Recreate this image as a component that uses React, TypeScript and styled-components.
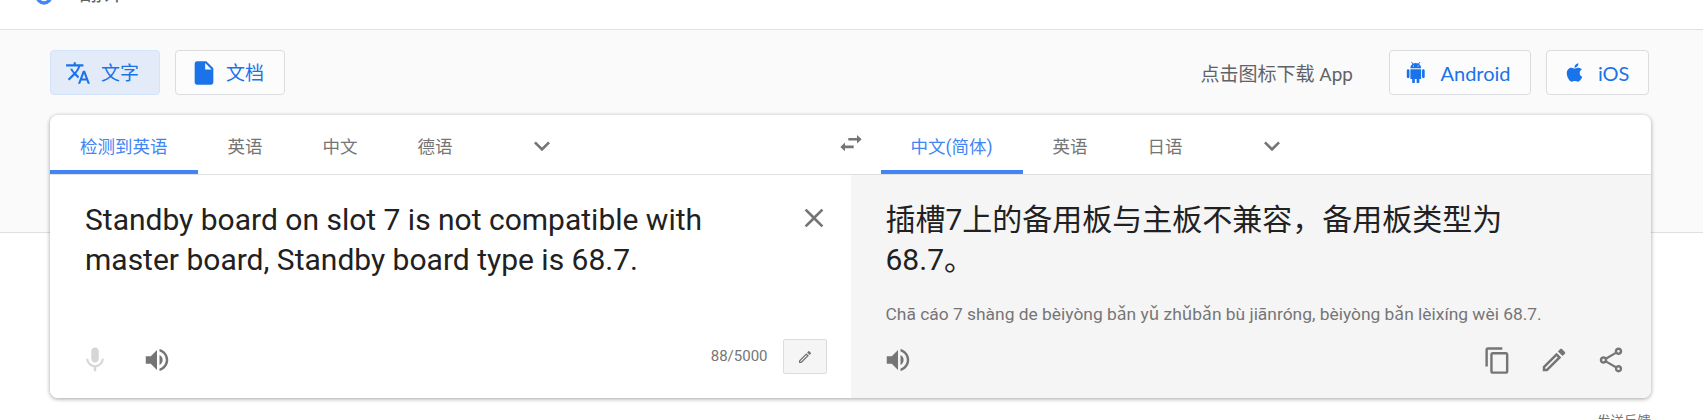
import React from 'react';
import styled, { createGlobalStyle } from 'styled-components';
import { FaApple } from 'react-icons/fa';
import {
  MdTranslate,
  MdInsertDriveFile,
  MdKeyboardArrowDown,
  MdClose,
  MdMic,
  MdVolumeUp,
  MdContentCopy,
  MdOutlineEdit,
  MdOutlineShare,
} from 'react-icons/md';

const colors = {
  blue: '#1a73e8',
  tab: '#4285f4',
  gray: '#757575',
  text: '#212121',
  line: '#e0e0e0',
};

const GlobalStyle = createGlobalStyle`
  html, body { margin: 0; padding: 0; background: #fff; overflow: hidden; }
  body { font-family: Roboto, "Noto Sans CJK SC", sans-serif; color: ${colors.text}; }
`;

const Page = styled.div`
  width: 1703px;
  height: 420px;
  overflow: hidden;
`;

// page is scrolled a little, only the bottom of the header shows
const TopBar = styled.header`
  height: 29px;
  overflow: hidden;
  border-bottom: 1px solid ${colors.line};
  display: flex;
  align-items: flex-end;
  padding-left: 36px;
  gap: 27px;
`;

const Logo = styled.svg`
  width: 16px;
  height: 20px;
  margin-bottom: 24px;
  flex: none;
`;

const Brand = styled.span`
  font-size: 23px;
  line-height: 30px;
  margin-bottom: 21px;
  color: #5f6368;
`;

const Band = styled.section`
  background: #fafafa;
  border-bottom: 1px solid ${colors.line};
  box-sizing: border-box;
  height: 203px;
  padding: 20px 52px 0 50px;
`;

const Toolbar = styled.div`
  display: flex;
  align-items: center;
  height: 45px;
  margin-bottom: 20px;
  padding-right: 2px;
`;

const ModeButton = styled.button<{ $active?: boolean }>`
  display: flex;
  align-items: center;
  height: 45px;
  width: 110px;
  box-sizing: border-box;
  white-space: nowrap;
  padding: 0 0 0 14px;
  margin-right: ${(p) => (p.$active ? 15 : 0)}px;
  gap: ${(p) => (p.$active ? 10 : 8)}px;
  border-radius: 4px;
  border: 1px solid ${(p) => (p.$active ? '#d2e3fc' : '#dadce0')};
  background: ${(p) => (p.$active ? '#e4ebf8' : '#fcfcfc')};
  color: ${colors.blue};
  font-family: inherit;
  font-size: 19px;
`;

const ModeLabel = styled.span`
  margin-bottom: 3px;
`;

const DownloadHint = styled.span`
  margin-left: auto;
  margin-right: 36px;
  font-size: 19px;
  color: #5f6368;
`;

const StoreButton = styled.button<{ $wide?: boolean }>`
  display: flex;
  align-items: center;
  height: 45px;
  box-sizing: border-box;
  white-space: nowrap;
  width: ${(p) => (p.$wide ? 142 : 103)}px;
  padding: 0 0 0 ${(p) => (p.$wide ? 15 : 17)}px;
  gap: ${(p) => (p.$wide ? 14 : 13)}px;
  margin-right: ${(p) => (p.$wide ? 15 : 0)}px;
  border-radius: 4px;
  border: 1px solid #dadce0;
  background: #fcfcfc;
  color: ${colors.blue};
  font-family: Lato, Roboto, sans-serif;
  font-size: 20px;
`;

const Card = styled.div`
  width: 1601px;
  height: 283px;
  background: #fff;
  border-radius: 8px;
  box-shadow: 0 1px 4px rgba(0, 0, 0, 0.37);
  overflow: hidden;
  display: flex;
  flex-direction: column;
`;

const LangBar = styled.div`
  display: grid;
  grid-template-columns: 1fr 1fr;
  height: 60px;
  flex: none;
  box-sizing: border-box;
  border-bottom: 1px solid ${colors.line};
`;

const TabRow = styled.div<{ $right?: boolean }>`
  display: flex;
  align-items: stretch;
  padding-left: ${(p) => (p.$right ? 30 : 0)}px;
`;

const Tab = styled.div<{ $active?: boolean }>`
  display: flex;
  align-items: center;
  padding: 6px 30px 0;
  font-size: 17.5px;
  color: ${(p) => (p.$active ? colors.tab : colors.gray)};
  border-bottom: 4px solid ${(p) => (p.$active ? colors.tab : 'transparent')};
`;

const More = styled.div`
  display: flex;
  align-items: center;
  margin-left: 43px;
  padding-top: 3px;
  color: ${colors.gray};
`;

const Swap = styled.div`
  margin-left: auto;
  margin-right: -12px;
  display: flex;
  align-items: center;
  color: ${colors.gray};
`;

const Panels = styled.div`
  display: grid;
  grid-template-columns: 1fr 1fr;
  flex: 1;
`;

const Panel = styled.div<{ $output?: boolean }>`
  position: relative;
  display: flex;
  flex-direction: column;
  background: ${(p) => (p.$output ? '#f5f5f5' : '#fff')};
  padding: 25px ${(p) => (p.$output ? 25 : 24)}px 0 35px;
`;

const MainText = styled.div`
  font-size: 30px;
  line-height: 40px;
  width: 640px;
  color: ${colors.text};
`;

const Pinyin = styled.div`
  font-size: 17.4px;
  line-height: 22px;
  margin-top: 23px;
  color: ${colors.gray};
`;

const ClearIcon = styled.div`
  position: absolute;
  top: 27px;
  right: 21px;
  color: ${colors.gray};
  display: flex;
`;

const Footer = styled.div<{ $output?: boolean }>`
  margin-top: auto;
  margin-bottom: 13px;
  margin-left: ${(p) => (p.$output ? -3 : -5)}px;
  height: 50px;
  display: flex;
  align-items: center;
  color: ${colors.gray};
  gap: 32px;
`;

const Tools = styled.div`
  margin-left: auto;
  display: flex;
  align-items: center;
  gap: 27px;
`;

const Counter = styled.span`
  margin-left: auto;
  margin-right: -17px;
  margin-bottom: 8px;
  font-size: 15px;
`;

const EditBox = styled.div`
  width: 44px;
  height: 35px;
  box-sizing: border-box;
  margin-bottom: 7px;
  border: 1px solid #dcdcdc;
  background: #f5f5f5;
  border-radius: 2px;
  display: flex;
  align-items: center;
  justify-content: center;
`;

const Feedback = styled.div`
  width: 1601px;
  text-align: right;
  font-size: 13.5px;
  line-height: 20px;
  margin: 178px 0 0 50px;
  color: ${colors.gray};
`;

const SwapIcon: React.FC = () => (
  <svg width="24" height="19" viewBox="0 0 24 19" fill="currentColor">
    <path d="M9.3 3 H18 V0 L22.7 4.3 L18 8.6 V5.6 H9.3 Z" />
    <path d="M14.7 10.6 H6 V7.6 L1.3 11.9 L6 16.2 V13.2 H14.7 Z" />
  </svg>
);

const AndroidIcon: React.FC = () => (
  <svg width="21.5" height="21.5" viewBox="0 0 24 24" fill="currentColor">
    <path d="M6 18c0 .55.45 1 1 1h1v3.5c0 .83.67 1.5 1.5 1.5s1.5-.67 1.5-1.5V19h2v3.5c0 .83.67 1.5 1.5 1.5s1.5-.67 1.5-1.5V19h1c.55 0 1-.45 1-1V8H6v10zM3.5 8C2.67 8 2 8.67 2 9.5v7c0 .83.67 1.5 1.5 1.5S5 17.33 5 16.5v-7C5 8.67 4.33 8 3.5 8zm17 0c-.83 0-1.5.67-1.5 1.5v7c0 .83.67 1.5 1.5 1.5s1.5-.67 1.5-1.5v-7c0-.83-.67-1.5-1.5-1.5zm-4.97-5.84l1.3-1.3c.2-.2.2-.51 0-.71-.2-.2-.51-.2-.71 0l-1.48 1.48C13.85 1.23 12.95 1 12 1c-.96 0-1.86.23-2.66.63L7.85.15c-.2-.2-.51-.2-.71 0-.2.2-.2.51 0 .71l1.31 1.31C6.97 3.26 6 5.01 6 7h12c0-1.99-.97-3.75-2.47-4.84zM10 5H9V4h1v1zm5 0h-1V4h1v1z" />
  </svg>
);

const App: React.FC = () => (
  <Page>
    <GlobalStyle />
    <TopBar>
      <Logo viewBox="0 0 16 20">
        <circle cx="8" cy="11.5" r="6.5" fill="none" stroke="#4285f4" strokeWidth="3.5" />
      </Logo>
      <Brand>翻译</Brand>
    </TopBar>

    <Band>
      <Toolbar>
        <ModeButton $active>
          <MdTranslate size={26} />
          <ModeLabel>文字</ModeLabel>
        </ModeButton>
        <ModeButton>
          <MdInsertDriveFile size={28} />
          <ModeLabel>文档</ModeLabel>
        </ModeButton>
        <DownloadHint>点击图标下载 App</DownloadHint>
        <StoreButton $wide>
          <AndroidIcon />
          Android
        </StoreButton>
        <StoreButton>
          <FaApple size={21} />
          iOS
        </StoreButton>
      </Toolbar>

      <Card>
        <LangBar>
          <TabRow>
            <Tab $active>检测到英语</Tab>
            <Tab>英语</Tab>
            <Tab>中文</Tab>
            <Tab>德语</Tab>
            <More><MdKeyboardArrowDown size={32} /></More>
            <Swap><SwapIcon /></Swap>
          </TabRow>
          <TabRow $right>
            <Tab $active>中文(简体)</Tab>
            <Tab>英语</Tab>
            <Tab>日语</Tab>
            <More><MdKeyboardArrowDown size={32} /></More>
          </TabRow>
        </LangBar>

        <Panels>
          <Panel>
            <MainText>Standby board on slot 7 is not compatible with master board, Standby board type is 68.7.</MainText>
            <ClearIcon><MdClose size={32} /></ClearIcon>
            <Footer>
              <MdMic size={30} color="#d6d6d6" />
              <MdVolumeUp size={30} />
              <Counter>88/5000</Counter>
              <EditBox><MdOutlineEdit size={16} /></EditBox>
            </Footer>
          </Panel>
          <Panel $output>
            <MainText>插槽7上的备用板与主板不兼容，备用板类型为 68.7。</MainText>
            <Pinyin>Chā cáo 7 shàng de bèiyòng bǎn yǔ zhǔbǎn bù jiānróng, bèiyòng bǎn lèixíng wèi 68.7.</Pinyin>
            <Footer $output>
              <MdVolumeUp size={30} />
              <Tools>
                <MdContentCopy size={29} />
                <MdOutlineEdit size={30} />
                <MdOutlineShare size={30} />
              </Tools>
            </Footer>
          </Panel>
        </Panels>
      </Card>
    </Band>
    <Feedback>发送反馈</Feedback>
  </Page>
);

export default App;
